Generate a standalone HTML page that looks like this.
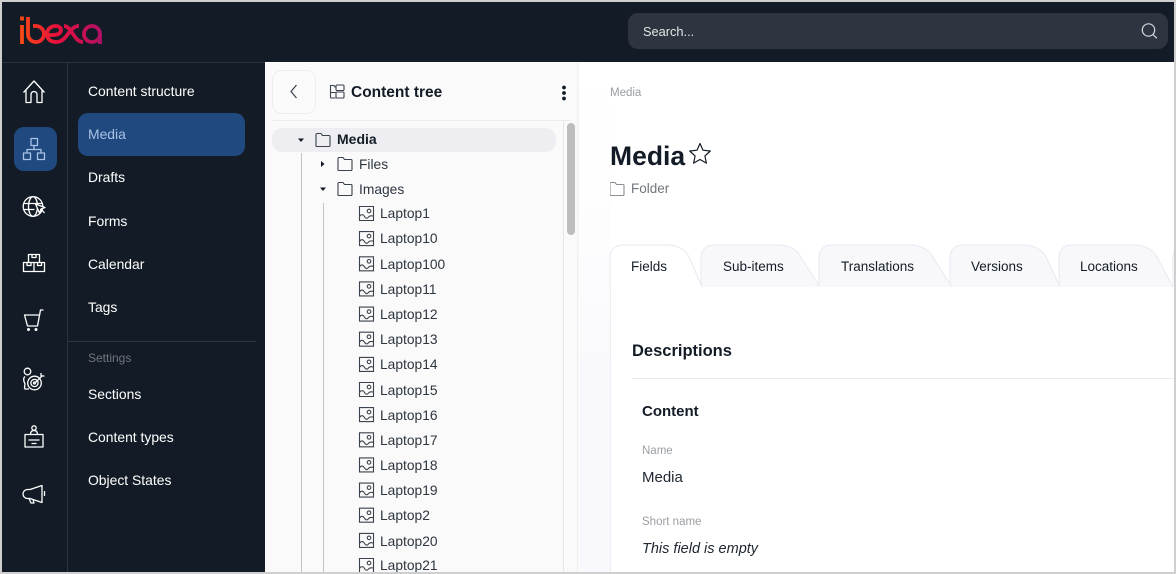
<!DOCTYPE html>
<html><head><meta charset="utf-8">
<style>
html,body{margin:0;padding:0;background:#fff}
#p{position:relative;width:1176px;height:574px;overflow:hidden;background:#fff;font-family:"Liberation Sans",sans-serif;font-size:14px;color:#131c26}
#p div{position:absolute}
.t{line-height:20px;white-space:nowrap;height:20px;margin-top:2px}
.n{left:88px;color:#fff;font-size:13.900px}
.l{left:380px;color:#2d3640;font-size:13.800px}
.tab{top:255px;color:#131c26;font-size:13.500px}
svg{position:absolute;overflow:visible}
</style></head><body><div id="p">
<div style="left:0;top:0;width:265px;height:574px;background:#131c26"></div>
<div style="left:0;top:0;width:1176px;height:62px;background:#131c26"></div>
<div style="left:0;top:62px;width:265px;height:1px;background:#2a323d"></div>
<div style="left:67px;top:63px;width:1px;height:511px;background:#2a323d"></div>
<div style="left:67px;top:341px;width:189px;height:1px;background:#2f3742"></div>
<div style="left:628px;top:13px;width:540px;height:36px;background:#2e3540;border-radius:10px"></div>
<div class="t" style="left:643px;top:20px;color:#e4e6e8;font-size:12.800px">Search...</div>
<svg style="left:0;top:0" width="1176" height="574" fill="none">
<circle cx="1148.500" cy="30" r="6.200" stroke="#d7dadd" stroke-width="1.200"/>
<path d="M1153 34.500l3.800 3.800" stroke="#d7dadd" stroke-width="1.200"/>
</svg>
<svg style="left:0;top:0" width="120" height="60" fill="none">
<defs><linearGradient id="g" x1="20" x2="102" y1="0" y2="0" gradientUnits="userSpaceOnUse"><stop offset="0" stop-color="#fb4a14"/><stop offset=".45" stop-color="#e8103c"/><stop offset="1" stop-color="#ae1164"/></linearGradient></defs>
<g stroke="url(#g)" stroke-width="3.800">
<path d="M22 25v19M22 16.500v4"/>
<path d="M28 17v17a8 8 0 1 0 8-8h-3"/>
<path d="M47 35h6c5 0 8-2 8-5c0-2-2-4-5-4c-6 0-9 4-9 8c0 5 4 8 9 8c6 0 9-4 12-8c3-4 6-8 11-8"/>
<path d="M64 26c4 0 6 4 9 8c3 4 5 8 10 8"/>
<circle cx="92" cy="34" r="8"/>
<path d="M100 34v10"/>
</g></svg>

<div style="left:14px;top:127px;width:43px;height:44px;background:#204a7f;border-radius:10px"></div>
<div style="left:78px;top:113px;width:167px;height:43px;background:#204a7f;border-radius:10px"></div>
<svg style="left:0;top:0" width="67" height="574" fill="none" stroke="#fff" stroke-width="1.300" stroke-linejoin="round">
<path d="M23.500 92.500L34 81l10.500 11.500M26 90v12.500h5v-8a3 3 0 0 1 6 0v8h5V90"/>
<g stroke="#a9c2e6"><path d="M31 138.500h6.500v7H31zM23.500 153h7v6.500h-7zM37.500 153h7v6.500h-7zM34 145.500v4M27 153v-3.500h14v3.500"/></g>
<g><circle cx="33" cy="206.500" r="9.800"/><ellipse cx="33" cy="206.500" rx="4.500" ry="9.800"/><path d="M23.500 203.500h19M23.500 209.500h11"/><path d="M35.500 204l9.500 3.500-4 1.500-1.500 4zM41 209l3.500 4" fill="#131c26"/></g>
<path d="M28.500 254.500h11v8h-11zM32 254.500v3h4v-3M23.500 262.500h10.500v9H23.500zM34 262.500h10.500v9H34zM27 262.500v3h4v-3M37.500 262.500v3h4v-3"/>
<path d="M43.500 310h-3l-3 16H27.500L24.500 315H40"/>
<g fill="#fff" stroke="none"><circle cx="28.500" cy="329.500" r="1.500"/><circle cx="36" cy="329.500" r="1.500"/></g>
<circle cx="27.500" cy="371.500" r="3.300"/><path d="M25 376.500c-1.500 1-1.500 3-1 5l1 2.500-.5 3.500.5 1.500h4"/>
<circle cx="34.500" cy="383" r="6.800"/><circle cx="34.500" cy="383" r="3.600"/><circle cx="34.500" cy="383" r="1"/><path d="M35 383l7.500-7.500M41 373v3h3.500"/>
<path d="M25 434.500h18v12.500H25zM28.500 440h11M31.500 443.500h5"/><circle cx="34" cy="428" r="2.200"/><path d="M30.500 434.500c0-3 1.500-4 3.500-4s3.500 1 3.500 4"/>
<path d="M30 489.500l12-4v17l-12-4h-2.500a4.500 4.500 0 0 1 0-9zM29 498.500l2 4.500h3l-1-3.500M44.500 491v5"/>
</svg>

<div class="t n" style="top:79px">Content structure</div>
<div class="t n" style="top:122px;color:#a9c2e6">Media</div>
<div class="t n" style="top:165px">Drafts</div>
<div class="t n" style="top:209px">Forms</div>
<div class="t n" style="top:252px">Calendar</div>
<div class="t n" style="top:295px">Tags</div>
<div class="t" style="left:88px;top:346px;color:#71767c;font-size:12px">Settings</div>
<div class="t n" style="top:382px">Sections</div>
<div class="t n" style="top:425px">Content types</div>
<div class="t n" style="top:468px">Object States</div>

<div style="left:265px;top:63px;width:315px;height:511px;background:#fafafa"></div>
<div style="left:272px;top:70px;width:42px;height:42px;border:1px solid #eeeeee;border-radius:10px;background:#fbfbfb"></div>
<div style="left:272px;top:120px;width:298px;height:1px;background:#ececec"></div>
<div style="left:272px;top:128px;width:284px;height:24px;background:#eeeef2;border-radius:10px"></div>
<div style="left:563px;top:121px;width:1px;height:453px;background:#e6e6e6"></div>
<div style="left:577px;top:63px;width:1px;height:511px;background:#efefef"></div>
<div style="left:567px;top:123px;width:8px;height:112px;background:#bdbdbd;border-radius:4px"></div>
<div style="left:301px;top:153px;width:1px;height:421px;background:#c4c4c4"></div>
<div style="left:323px;top:203px;width:1px;height:371px;background:#c4c4c4"></div>
<svg style="left:0;top:0" width="600" height="574" fill="none" stroke="#3a424c" stroke-width="1.100">
<defs>
<g id="f"><path d="M0 11.500V1.500A1 1 0 0 1 1 .5h4l1.500 2H13a1 1 0 0 1 1 1v9a1 1 0 0 1-1 1H1a1 1 0 0 1-1-1.500z"/></g>
<g id="i"><path d="M.5.5h14v14H.5zM.5 10.500c1.500-2.500 3.500-2.500 5 0s3 2 4 .5 2.500-1.500 5-1"/><circle cx="10" cy="5" r="1.800"/></g>
</defs>
<path d="M296.500 85l-5.500 6.500 5.500 6.500" stroke="#3a424c" stroke-width="1.200"/>
<path d="M330.500 85v6.500a1 1 0 0 0 1 1h4M330.500 92.500v4.500a1 1 0 0 0 1 1h4M330.500 85.500h3.500l1 1.500h1" stroke-width="1.100"/>
<rect x="336" y="85" width="8" height="5.500" rx="1"/>
<rect x="336" y="92" width="8" height="6" rx="1"/>
<use href="#f" x="316" y="133"/>
<use href="#f" x="338" y="157"/>
<use href="#f" x="338" y="182"/>
<use href="#i" x="359" y="206"/>
<use href="#i" x="359" y="231.100"/>
<use href="#i" x="359" y="256.300"/>
<use href="#i" x="359" y="281.400"/>
<use href="#i" x="359" y="306.600"/>
<use href="#i" x="359" y="331.700"/>
<use href="#i" x="359" y="356.900"/>
<use href="#i" x="359" y="382"/>
<use href="#i" x="359" y="407.100"/>
<use href="#i" x="359" y="432.300"/>
<use href="#i" x="359" y="457.400"/>
<use href="#i" x="359" y="482.600"/>
<use href="#i" x="359" y="507.700"/>
<use href="#i" x="359" y="532.900"/>
<use href="#i" x="359" y="558"/>
<g fill="#131c26" stroke="none">
<path d="M298 138.500h6l-3 3.500zM320 187.500h6l-3 3.500zM321 161l3.500 3-3.500 3z"/>
<circle cx="564" cy="87.500" r="1.900"/><circle cx="564" cy="93" r="1.900"/><circle cx="564" cy="98.500" r="1.900"/>
</g>
<g transform="translate(610,182)" stroke="#8a8f95"><use href="#f"/></g>
</svg>
<div class="t" style="left:351px;top:81px;font-weight:bold;font-size:15.500px">Content tree</div>
<div class="t" style="left:337px;top:127px;font-weight:bold;font-size:14px">Media</div>
<div class="t l" style="left:359px;top:153px">Files</div>
<div class="t l" style="left:359px;top:178px">Images</div>
<div class="t l" style="top:202px">Laptop1</div>
<div class="t l" style="top:227px">Laptop10</div>
<div class="t l" style="top:253px">Laptop100</div>
<div class="t l" style="top:278px">Laptop11</div>
<div class="t l" style="top:303px">Laptop12</div>
<div class="t l" style="top:328px">Laptop13</div>
<div class="t l" style="top:353px">Laptop14</div>
<div class="t l" style="top:379px">Laptop15</div>
<div class="t l" style="top:404px">Laptop16</div>
<div class="t l" style="top:429px">Laptop17</div>
<div class="t l" style="top:454px">Laptop18</div>
<div class="t l" style="top:479px">Laptop19</div>
<div class="t l" style="top:504px">Laptop2</div>
<div class="t l" style="top:530px">Laptop20</div>
<div class="t l" style="top:554px">Laptop21</div>

<div style="left:580px;top:63px;width:30px;height:511px;background:linear-gradient(to bottom,#ffffff 0%,#fdfdfe 35%,#f9f9fd 60%,#f9f9fd 100%)"></div>
<div style="left:610px;top:287px;width:1px;height:287px;background:#eeeef5"></div>
<div class="t" style="left:610px;top:81px;color:#9a9ea3;font-size:11.500px">Media</div>
<div class="t" style="left:610px;top:138px;height:32px;line-height:32px;font-weight:bold;font-size:26.500px">Media</div>
<svg style="left:689px;top:142px" width="24" height="24" fill="none" stroke="#131c26" stroke-width="1.200" stroke-linejoin="round"><path d="M11 1.500l3 6.700 7.300.8-5.400 4.900 1.500 7.200-6.400-3.600-6.400 3.600 1.500-7.200L.7 9l7.300-.8z"/></svg>
<div class="t" style="left:631px;top:177px;color:#71767c;font-size:13.500px">Folder</div>

<svg style="left:0;top:0" width="1176" height="574" fill="#f8f8fb" stroke="#e8e8f1" stroke-width="1">
<path d="M1173 287v-30a13 13 0 0 1 3-8"/>
<path d="M1059 287v-30a12 12 0 0 1 12-12h62c13 0 21 5 25 14l15 28"/>
<path d="M950 287v-30a12 12 0 0 1 12-12h60c13 0 21 5 25 14l13 28"/>
<path d="M819 287v-30a12 12 0 0 1 12-12h78c13 0 21 5 25 14l18 28"/>
<path d="M701 287v-30a12 12 0 0 1 12-12h64c13 0 21 5 25 14l18 28"/>
<path d="M610 287v-30a12 12 0 0 1 12-12h44c13 0 20 5 24 14l12 28" fill="#fff"/>
</svg>
<div class="t tab" style="left:631px">Fields</div>
<div class="t tab" style="left:723px">Sub-items</div>
<div class="t tab" style="left:841px">Translations</div>
<div class="t tab" style="left:971px">Versions</div>
<div class="t tab" style="left:1080px">Locations</div>
<div style="left:702px;top:287px;width:474px;height:1px;background:#fff"></div>

<div class="t" style="left:632px;top:339px;font-weight:bold;font-size:16.500px">Descriptions</div>
<div style="left:632px;top:378px;width:544px;height:1px;background:#eaeaee"></div>
<div class="t" style="left:642px;top:400px;font-weight:bold;font-size:15px">Content</div>
<div class="t" style="left:642px;top:439px;color:#9a9ea3;font-size:11.500px">Name</div>
<div class="t" style="left:642px;top:466px;font-size:15px;color:#1d2630">Media</div>
<div class="t" style="left:642px;top:510px;color:#9a9ea3;font-size:11.500px">Short name</div>
<div class="t" style="left:642px;top:537px;font-size:14.500px;font-style:italic;color:#1d2630">This field is empty</div>

<div style="left:0;top:0;width:1176px;height:2px;background:#cfcfcf"></div>
<div style="left:0;top:572px;width:1176px;height:2px;background:#cfcfcf"></div>
<div style="left:0;top:0;width:2px;height:574px;background:#cfcfcf"></div>
<div style="left:1174px;top:0;width:2px;height:574px;background:#cfcfcf"></div>
</div></body></html>
